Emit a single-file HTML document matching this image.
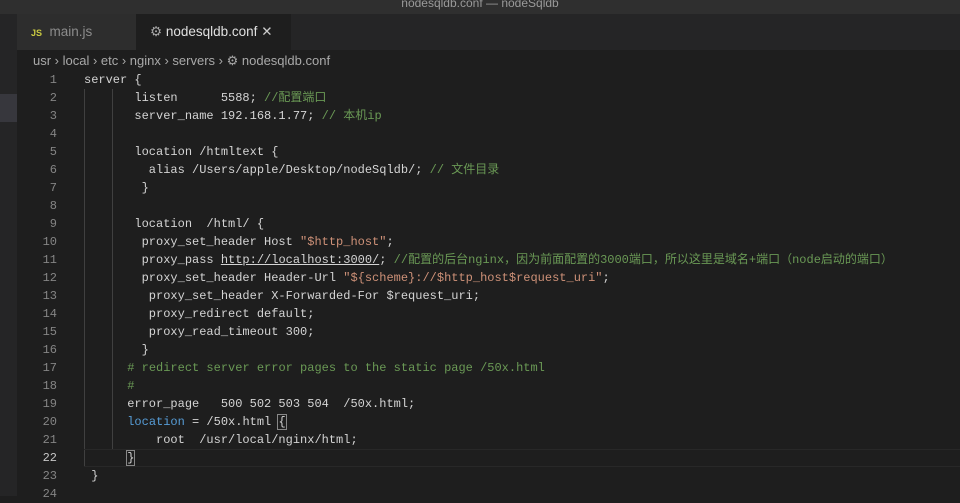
<html><head><style>
body{margin:0;width:960px;height:496px;background:#1e1e1e;overflow:hidden;position:relative;font-family:"Liberation Sans","Noto Sans CJK SC",sans-serif}
.title{position:absolute;left:0;top:0;width:960px;height:14px;background:#2f2f2f;color:#9a9a9a;font-size:12px;text-align:center;line-height:6px;overflow:hidden}
.tabs{position:absolute;left:17px;top:14px;width:943px;height:36px;background:#252526}
.tab{position:absolute;top:0;height:36px;line-height:36px;font-size:13.5px}
.side{position:absolute;left:0;top:14px;width:17px;height:482px;background:#252526}
.crumb{position:absolute;left:33px;top:53px;font-size:13px;color:#a9a9a9}
.code{position:absolute;top:71px;left:0;font-family:"Liberation Mono","Noto Sans CJK SC",monospace;font-size:12px}
.ln{position:absolute;left:17px;width:40px;text-align:right;color:#858585;height:18px;line-height:18px}
.l{position:absolute;left:84px;white-space:pre;color:#d4d4d4;height:18px;line-height:18px}
.c{color:#6a9955}.s{color:#ce9178}.k{color:#569cd6}.u{text-decoration:underline}
</style></head><body>
<div class="title">nodesqldb.conf — nodeSqldb</div>
<div class="side">
<div style="position:absolute;left:0;top:80px;width:17px;height:28px;background:#37373d"></div>
</div>
<div class="tabs">
<div class="tab" style="left:0;width:119px;background:#2d2d2d;color:#8c8c8c;padding-left:14px;box-sizing:border-box"><span style="color:#cbcb41;font-size:9px;font-weight:bold">JS</span>&nbsp; main.js</div>
<div class="tab" style="left:119px;width:155px;background:#1e1e1e;color:#e0e0e0;padding-left:14px;box-sizing:border-box"><span style="color:#aaa">⚙</span> nodesqldb.conf <span style="color:#ccc">✕</span></div>
</div>
<div class="crumb">usr › local › etc › nginx › servers › <span>⚙</span> nodesqldb.conf</div>
<div class="code">
<div class="ln" style="top:0">1</div><div class="ln" style="top:18px">2</div><div class="ln" style="top:36px">3</div><div class="ln" style="top:54px">4</div><div class="ln" style="top:72px">5</div><div class="ln" style="top:90px">6</div><div class="ln" style="top:108px">7</div><div class="ln" style="top:126px">8</div><div class="ln" style="top:144px">9</div><div class="ln" style="top:162px">10</div><div class="ln" style="top:180px">11</div><div class="ln" style="top:198px">12</div><div class="ln" style="top:216px">13</div><div class="ln" style="top:234px">14</div><div class="ln" style="top:252px">15</div><div class="ln" style="top:270px">16</div><div class="ln" style="top:288px">17</div><div class="ln" style="top:306px">18</div><div class="ln" style="top:324px">19</div><div class="ln" style="top:342px">20</div><div class="ln" style="top:360px">21</div><div class="ln" style="top:378px;color:#c6c6c6">22</div><div class="ln" style="top:396px">23</div><div class="ln" style="top:414px">24</div>
<div style="position:absolute;left:84px;top:18px;width:1px;height:378px;background:#404040"></div>
<div style="position:absolute;left:112px;top:18px;width:1px;height:360px;background:#404040"></div>
<div class="l" style="top:0">server {</div>
<div class="l" style="top:18px">       listen      5588; <span class="c">//配置端口</span></div>
<div class="l" style="top:36px">       server_name 192.168.1.77; <span class="c">// 本机ip</span></div>
<div class="l" style="top:72px">       location /htmltext {</div>
<div class="l" style="top:90px">         alias /Users/apple/Desktop/nodeSqldb/; <span class="c">// 文件目录</span></div>
<div class="l" style="top:108px">        }</div>
<div class="l" style="top:144px">       location  /html/ {</div>
<div class="l" style="top:162px">        proxy_set_header Host <span class="s">"$http_host"</span>;</div>
<div class="l" style="top:180px">        proxy_pass <span class="u">http://localhost:3000/</span>; <span class="c">//配置的后台nginx，因为前面配置的3000端口，所以这里是域名+端口（node启动的端口）</span></div>
<div class="l" style="top:198px">        proxy_set_header Header-Url <span class="s">"${scheme}://$http_host$request_uri"</span>;</div>
<div class="l" style="top:216px">         proxy_set_header X-Forwarded-For $request_uri;</div>
<div class="l" style="top:234px">         proxy_redirect default;</div>
<div class="l" style="top:252px">         proxy_read_timeout 300;</div>
<div class="l" style="top:270px">        }</div>
<div class="l" style="top:288px">      <span class="c"># redirect server error pages to the static page /50x.html</span></div>
<div class="l" style="top:306px">      <span class="c">#</span></div>
<div class="l" style="top:324px">      error_page   500 502 503 504  /50x.html;</div>
<div class="l" style="top:342px">      <span class="k">location</span> = /50x.html <span style="outline:1px solid #888">{</span></div>
<div class="l" style="top:360px">          root  /usr/local/nginx/html;</div>
<div style="position:absolute;left:84px;top:378px;width:876px;height:18px;border-top:1px solid #282828;border-bottom:1px solid #282828;box-sizing:border-box"></div>
<div class="l" style="top:378px">      <span style="outline:1px solid #888">}</span></div>
<div class="l" style="top:396px"> }</div>
</div>
</body></html>
